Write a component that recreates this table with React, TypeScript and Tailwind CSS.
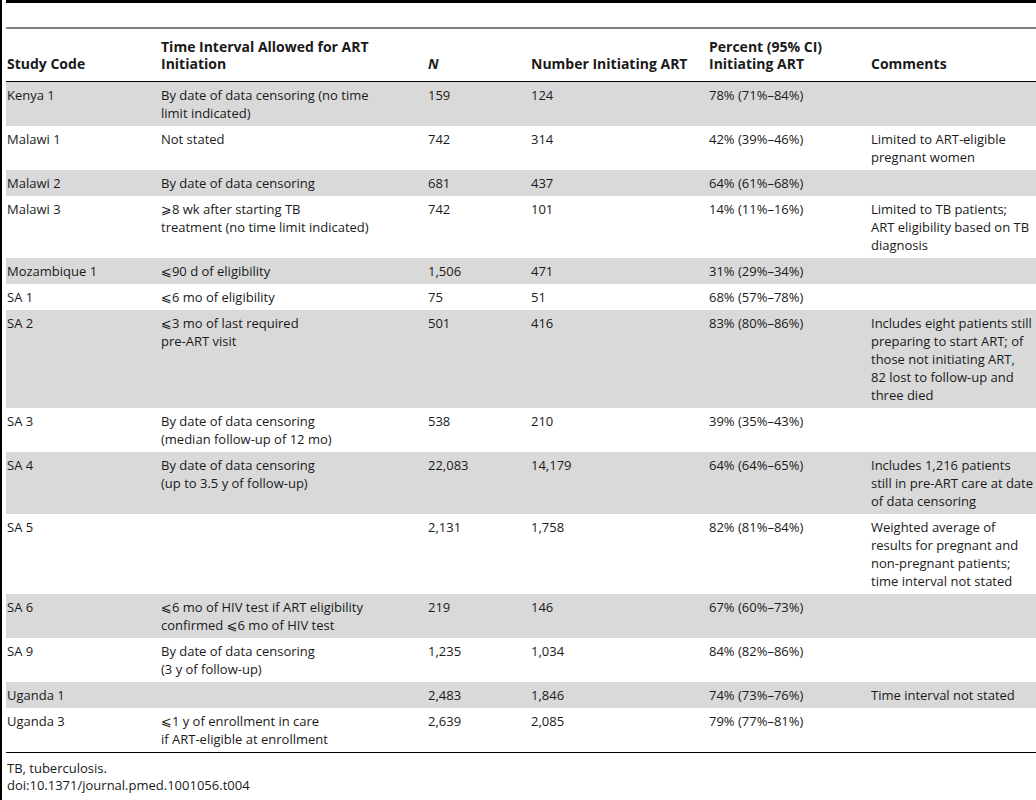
const rows: { code: string; interval: string[]; n: string; init: string; pct: string; comments: string[]; gray: boolean }[] = [
  { code: "Kenya 1", interval: ["By date of data censoring (no time", "limit indicated)"], n: "159", init: "124", pct: "78% (71%–84%)", comments: [], gray: true },
  { code: "Malawi 1", interval: ["Not stated"], n: "742", init: "314", pct: "42% (39%–46%)", comments: ["Limited to ART-eligible", "pregnant women"], gray: false },
  { code: "Malawi 2", interval: ["By date of data censoring"], n: "681", init: "437", pct: "64% (61%–68%)", comments: [], gray: true },
  { code: "Malawi 3", interval: ["⩾8 wk after starting TB", "treatment (no time limit indicated)"], n: "742", init: "101", pct: "14% (11%–16%)", comments: ["Limited to TB patients;", "ART eligibility based on TB", "diagnosis"], gray: false },
  { code: "Mozambique 1", interval: ["⩽90 d of eligibility"], n: "1,506", init: "471", pct: "31% (29%–34%)", comments: [], gray: true },
  { code: "SA 1", interval: ["⩽6 mo of eligibility"], n: "75", init: "51", pct: "68% (57%–78%)", comments: [], gray: false },
  { code: "SA 2", interval: ["⩽3 mo of last required", "pre-ART visit"], n: "501", init: "416", pct: "83% (80%–86%)", comments: ["Includes eight patients still", "preparing to start ART; of", "those not initiating ART,", "82 lost to follow-up and", "three died"], gray: true },
  { code: "SA 3", interval: ["By date of data censoring", "(median follow-up of 12 mo)"], n: "538", init: "210", pct: "39% (35%–43%)", comments: [], gray: false },
  { code: "SA 4", interval: ["By date of data censoring", "(up to 3.5 y of follow-up)"], n: "22,083", init: "14,179", pct: "64% (64%–65%)", comments: ["Includes 1,216 patients", "still in pre-ART care at date", "of data censoring"], gray: true },
  { code: "SA 5", interval: [], n: "2,131", init: "1,758", pct: "82% (81%–84%)", comments: ["Weighted average of", "results for pregnant and", "non-pregnant patients;", "time interval not stated"], gray: false },
  { code: "SA 6", interval: ["⩽6 mo of HIV test if ART eligibility", "confirmed ⩽6 mo of HIV test"], n: "219", init: "146", pct: "67% (60%–73%)", comments: [], gray: true },
  { code: "SA 9", interval: ["By date of data censoring", "(3 y of follow-up)"], n: "1,235", init: "1,034", pct: "84% (82%–86%)", comments: [], gray: false },
  { code: "Uganda 1", interval: [], n: "2,483", init: "1,846", pct: "74% (73%–76%)", comments: ["Time interval not stated"], gray: true },
  { code: "Uganda 3", interval: ["⩽1 y of enrollment in care", "if ART-eligible at enrollment"], n: "2,639", init: "2,085", pct: "79% (77%–81%)", comments: [], gray: false },
];

const font = { fontFamily: '"Open Sans", "DejaVu Sans", sans-serif' };

function Lines({ lines }: { lines: string[] }) {
  return (
    <>
      {lines.map((l, i) => (
        <div key={i}>{l}</div>
      ))}
    </>
  );
}

export default function App() {
  return (
    <div style={font} className="flex h-[800px] w-[1036px] overflow-hidden bg-white text-[13px] leading-[18px] text-[#1a1a1a]">
      {/* barra izquierda */}
      <div className="w-[2px] shrink-0 bg-black" />
      <div className="ml-[4px] min-w-0 flex-1 overflow-hidden">
        <div className="h-[3px] w-[1100px] bg-black" />
        <div className="h-[24px]" />
        <div className="h-[2px] w-[1100px] bg-[#808080]" />
        <table className="w-[1036px] table-fixed border-collapse whitespace-nowrap">
          <colgroup>
            <col className="w-[150px]" />
            <col className="w-[267px]" />
            <col className="w-[103px]" />
            <col className="w-[178px]" />
            <col className="w-[162px]" />
            <col className="w-[176px]" />
          </colgroup>
          <thead>
            <tr className="border-b border-black align-bottom text-[14px] font-bold leading-[17px]">
              <th className="pb-[9px] pl-[1px] pt-[9px] text-left">Study Code</th>
              <th className="pb-[9px] pl-[5px] pt-[9px] text-left">
                <Lines lines={["Time Interval Allowed for ART", "Initiation"]} />
              </th>
              <th className="pb-[9px] pl-[5px] pt-[9px] text-left italic">N</th>
              <th className="pb-[9px] pl-[5px] pt-[9px] text-left">Number Initiating ART</th>
              <th className="pb-[9px] pl-[5px] pt-[9px] text-left">
                <Lines lines={["Percent (95% CI)", "Initiating ART"]} />
              </th>
              <th className="pb-[9px] pl-[5px] pt-[9px] text-left">Comments</th>
            </tr>
          </thead>
          <tbody>
            {rows.map((r) => (
              <tr key={r.code} className={r.gray ? "bg-[#d9d9d9] align-top" : "align-top"}>
                <td className="py-1 pl-[1px]">{r.code}</td>
                <td className="py-1 pl-[5px]">
                  <Lines lines={r.interval} />
                </td>
                <td className="py-1 pl-[5px]">{r.n}</td>
                <td className="py-1 pl-[5px]">{r.init}</td>
                <td className="py-1 pl-[5px]">{r.pct}</td>
                <td className="overflow-hidden py-1 pl-[5px]">
                  <Lines lines={r.comments} />
                </td>
              </tr>
            ))}
          </tbody>
        </table>
        <div className="w-[1100px] border-t border-black" />
        <div className="pl-[1px] pt-[7px] leading-[17px]">
          <div>TB, tuberculosis.</div>
          <div>doi:10.1371/journal.pmed.1001056.t004</div>
        </div>
      </div>
    </div>
  );
}
